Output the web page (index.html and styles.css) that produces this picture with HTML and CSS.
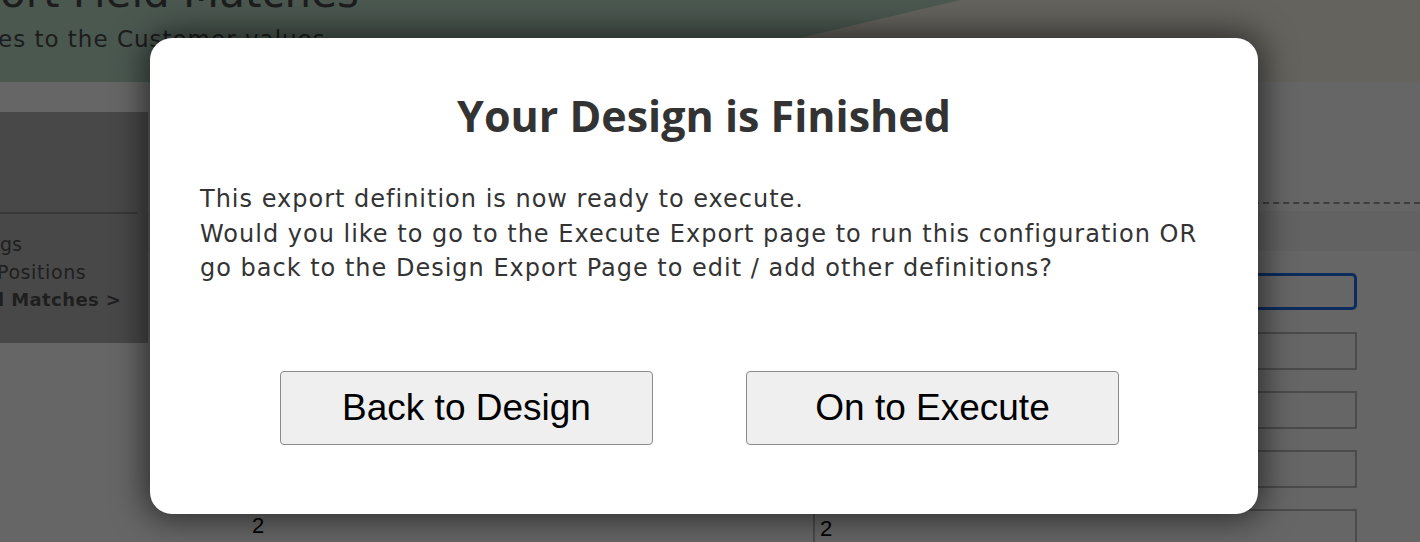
FILE: index.html
```html
<!DOCTYPE html>
<html>
<head>
<meta charset="utf-8">
<title>Export Field Matches</title>
<link rel="stylesheet" href="styles.css">
</head>
<body>
<div class="page">
  <header class="hdr">
    <div class="hdr-title">ort Field Matches</div>
    <div class="hdr-sub">es to the Customer values</div>
  </header>
  <div class="band"></div>
  <div class="body">
    <aside class="side">
      <div class="side-top"></div>
      <ul class="steps">
        <li class="s1">gs</li>
        <li class="s2">Positions</li>
        <li class="s3 cur">l Matches &gt;</li>
      </ul>
    </aside>
    <main class="main">
      <div class="dash"></div>
      <div class="colhead"></div>
      <div class="rows">
        <div class="row"><span class="lbl"></span><span class="inp focus"></span></div>
        <div class="row"><span class="lbl"></span><span class="inp"></span></div>
        <div class="row"><span class="lbl"></span><span class="inp"></span></div>
        <div class="row"><span class="lbl"></span><span class="inp"></span></div>
        <div class="row"><span class="lbl">2</span><span class="inp">2</span></div>
      </div>
    </main>
  </div>
</div>
<div class="overlay"></div>
<div class="modal">
  <h1 class="m-title">Your Design is Finished</h1>
  <p class="m-text">This export definition is now ready to execute.<br>Would you like to go to the Execute Export page to run this configuration OR<br>go back to the Design Export Page to edit / add other definitions?</p>
  <div class="m-actions">
    <button class="btn">Back to Design</button>
    <button class="btn">On to Execute</button>
  </div>
</div>
</body>
</html>
```
FILE: styles.css
```css
html, body { margin: 0; padding: 0; }
body {
  width: 1420px;
  height: 542px;
  overflow: hidden;
  background: #fff;
  font-family: "DejaVu Sans", Verdana, sans-serif;
  position: relative;
}
.page { width: 1420px; }
.hdr {
  height: 82px;
  background: #bcdbc8;
  position: relative;
  z-index: 0;
  overflow: hidden;
  color: #4a4a4a;
}
.hdr::after {
  content: "";
  position: absolute;
  inset: 0;
  background: #fcf7e9;
  clip-path: polygon(960px 0, 100% 0, 100% 100%, 615px 100%);
}
.hdr-title {
  font-size: 42px;
  line-height: 42px;
  margin-top: -28px;
  white-space: nowrap;
  position: relative;
  z-index: 1;
}
.hdr-sub {
  font-size: 23px;
  letter-spacing: 1px;
  line-height: 30px;
  margin-top: 10px;
  margin-left: -2px;
  white-space: nowrap;
  position: relative;
  z-index: 1;
}
.band { height: 30px; background: #fff; }
.body { display: flex; }
.side {
  width: 148px;
  height: 231px;
  background: #b5b5b5;
  flex: none;
}
.side-top { height: 100px; border-bottom: 2px solid #8c8c8c; width: 137px; }
.steps {
  list-style: none;
  margin: 0;
  padding: 16px 0 0 0;
  font-size: 19px;
  line-height: 28px;
  color: #4f4f4f;
  white-space: nowrap;
}
.steps .s1 { padding-left: 0; }
.steps .s2 { margin-left: -3px; letter-spacing: 0.6px; }
.steps .s3 { margin-left: -2px; font-size: 18px; letter-spacing: 0.4px; }
.steps .cur { font-weight: bold; }
.main { flex: 1; padding-top: 90px; }
.dash { border-top: 2px dashed #9a9a9a; margin-left: 1105px; }
.colhead { height: 40px; background: #f5f5f5; margin-top: 7px; }
.rows { padding-top: 22px; display: flex; flex-direction: column; gap: 21px; }
.row { display: grid; grid-template-columns: 665px 544px; height: 38px; }
.lbl {
  font-family: "Liberation Sans Narrow", "Liberation Sans", sans-serif;
  font-size: 22px;
  color: #000;
  padding: 4px 0 0 104px;
}
.inp {
  border: 2px solid #bbb;
  box-sizing: border-box;
  font-family: "Liberation Sans Narrow", "Liberation Sans", sans-serif;
  font-size: 22px;
  color: #000;
  padding: 5px 0 0 5px;
}
.inp.focus { border: 3px solid #1d6fe8; border-radius: 5px; height: 37px; }
.overlay {
  position: absolute;
  inset: 0;
  background: rgba(0, 0, 0, 0.6);
}
.modal {
  position: absolute;
  left: 150px;
  top: 38px;
  width: 1108px;
  height: 476px;
  box-sizing: border-box;
  background: #fff;
  border-radius: 22px;
  box-shadow: 0 0 32px 6px rgba(0, 0, 0, 0.55);
  padding: 0 50px;
  color: #333;
}
.m-title {
  margin: 0;
  padding-top: 50px;
  text-align: center;
  font-family: "Open Sans", sans-serif;
  font-size: 43px;
  line-height: 56px;
  font-weight: bold;
}
.m-text {
  margin: 38px 0 0 0;
  font-size: 24px;
  letter-spacing: 1px;
  line-height: 34.5px;
  white-space: nowrap;
}
.m-actions {
  display: flex;
  gap: 93px;
  margin-top: 85px;
  padding-left: 80px;
}
.btn {
  width: 373px;
  height: 74px;
  background: #efefef;
  border: 1px solid #8a8a8a;
  border-radius: 4px;
  font-family: "Liberation Sans", Arial, sans-serif;
  font-size: 37px;
  color: #000;
  padding: 0;
}
```
